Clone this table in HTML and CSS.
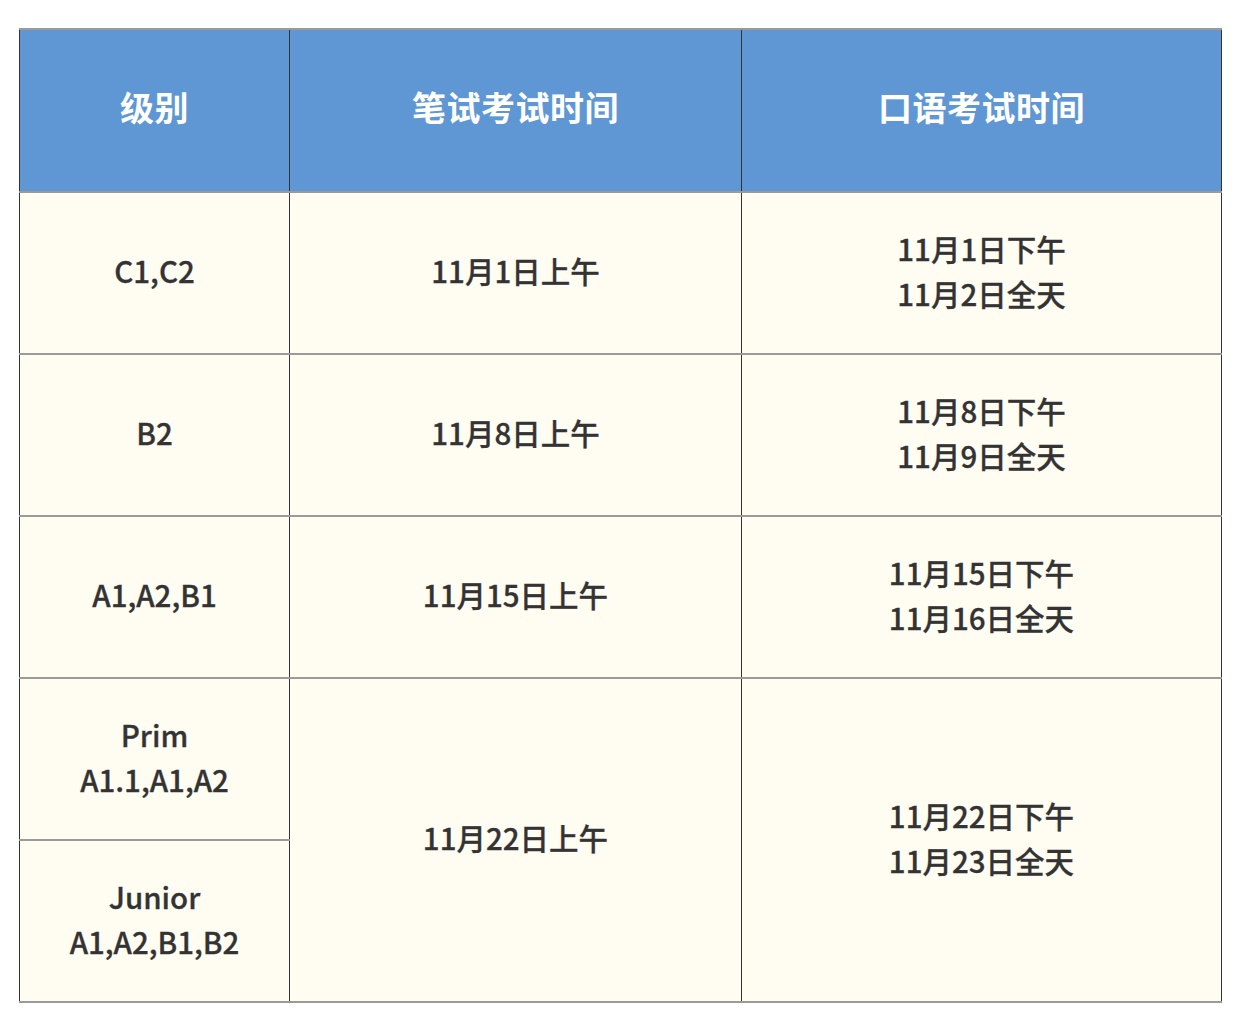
FILE: index.html
```html
<!DOCTYPE html>
<html lang="zh">
<head>
<meta charset="utf-8">
<link rel="stylesheet" href="styles.css">
</head>
<body>
<table class="schedule">
  <colgroup>
    <col class="c1">
    <col class="c2">
    <col class="c3">
  </colgroup>
  <thead>
    <tr class="row-head">
      <th>级别</th>
      <th>笔试考试时间</th>
      <th>口语考试时间</th>
    </tr>
  </thead>
  <tbody>
    <tr class="row">
      <td>C1,C2</td>
      <td>11月1日上午</td>
      <td>11月1日下午<br>11月2日全天</td>
    </tr>
    <tr class="row">
      <td>B2</td>
      <td>11月8日上午</td>
      <td>11月8日下午<br>11月9日全天</td>
    </tr>
    <tr class="row">
      <td>A1,A2,B1</td>
      <td>11月15日上午</td>
      <td>11月15日下午<br>11月16日全天</td>
    </tr>
    <tr class="row">
      <td>Prim<br>A1.1,A1,A2</td>
      <td rowspan="2">11月22日上午</td>
      <td rowspan="2">11月22日下午<br>11月23日全天</td>
    </tr>
    <tr class="row">
      <td>Junior<br>A1,A2,B1,B2</td>
    </tr>
  </tbody>
</table>
</body>
</html>
```

FILE: styles.css
```css
html, body {
  margin: 0;
  padding: 0;
  background: #ffffff;
}
body {
  padding: 28px 0 0 19px;
  font-family: "Noto Sans CJK SC", "Noto Sans", sans-serif;
}
.schedule {
  border-collapse: collapse;
  table-layout: fixed;
  width: 1202px;
  color: #333333;
}
.c1 { width: 270px; }
.c2 { width: 452px; }
.c3 { width: 480px; }
.schedule th,
.schedule td {
  text-align: center;
  vertical-align: middle;
  padding: 0;
  border-left: 1px solid #333333;
  border-right: 1px solid #333333;
  border-top: 2px solid #9a9a9a;
  border-bottom: 2px solid #9a9a9a;
}
.row-head th {
  background: #5e97d4;
  color: #ffffff;
  font-size: 34px;
  font-weight: 700;
  height: 153px;
  padding-bottom: 8px;
  letter-spacing: 0.5px;
}
.row td {
  background: #fffcf2;
  font-size: 29.5px;
  font-weight: 500;
  line-height: 45px;
  height: 155px;
  padding-bottom: 5px;
  -webkit-text-stroke: 0.3px #333333;
}
```
